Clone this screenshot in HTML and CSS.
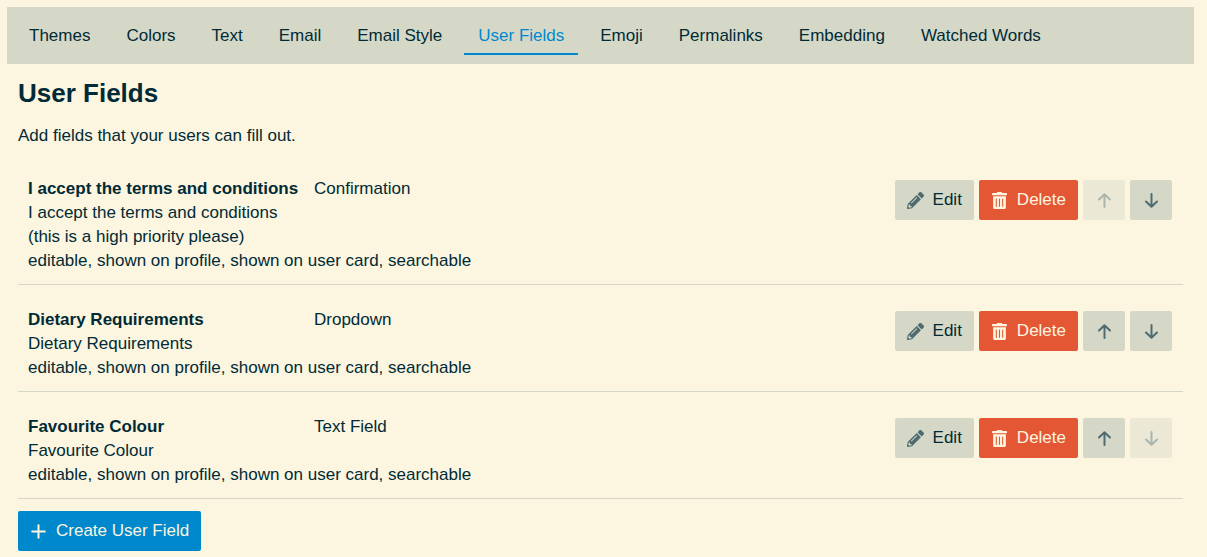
FILE: index.html
```html
<!DOCTYPE html>
<html lang="en">
<head>
<meta charset="utf-8">
<meta name="viewport" content="width=device-width, initial-scale=1">
<title>User Fields</title>
<link rel="stylesheet" href="styles.css">
</head>
<body>
<svg class="sprite" aria-hidden="true">
  <symbol id="pencil" viewBox="0 0 512 512"><path d="M497.900 142.100l-46.100 46.100c-4.700 4.700-12.300 4.700-17 0l-111-111c-4.700-4.700-4.700-12.300 0-17l46.100-46.100c18.700-18.700 49.100-18.700 67.900 0l60.100 60.100c18.800 18.700 18.800 49.100 0 67.900zM284.200 99.800L21.600 362.400.4 483.900c-2.900 16.400 11.400 30.600 27.800 27.800l121.500-21.300 262.600-262.600c4.700-4.700 4.700-12.300 0-17l-111-111c-4.800-4.700-12.400-4.700-17.100 0zM124.100 339.900c-5.500-5.500-5.500-14.300 0-19.800l154-154c5.500-5.500 14.300-5.500 19.800 0s5.500 14.300 0 19.800l-154 154c-5.500 5.500-14.300 5.500-19.800 0zM88 424h48v36.300l-64.500 11.300-31.100-31.100L51.700 376H88v48z"/></symbol>
  <symbol id="trash" viewBox="0 0 448 512"><path d="M32 464a48 48 0 0 0 48 48h288a48 48 0 0 0 48-48V128H32zm272-256a16 16 0 0 1 32 0v224a16 16 0 0 1-32 0zm-96 0a16 16 0 0 1 32 0v224a16 16 0 0 1-32 0zm-96 0a16 16 0 0 1 32 0v224a16 16 0 0 1-32 0zM432 32H312l-9.400-18.700A24 24 0 0 0 281.100 0H166.800a23.720 23.720 0 0 0-21.400 13.300L136 32H16A16 16 0 0 0 0 48v32a16 16 0 0 0 16 16h416a16 16 0 0 0 16-16V48a16 16 0 0 0-16-16z"/></symbol>
  <symbol id="up" viewBox="0 0 17 17"><path class="stroke" d="M8.500 15V2.400M3 7.500l5.500-5.300L14 7.500"/></symbol>
  <symbol id="down" viewBox="0 0 17 17"><path class="stroke" d="M8.500 2v12.600M3 9.500l5.500 5.300L14 9.500"/></symbol>
  <symbol id="plus" viewBox="0 0 17 17"><path class="stroke" d="M8.500 2.200v12.600M2.200 8.500h12.600"/></symbol>
</svg>
<nav class="tabs" aria-label="Customize">
  <a href="#">Themes</a>
  <a href="#">Colors</a>
  <a href="#">Text</a>
  <a href="#">Email</a>
  <a href="#">Email Style</a>
  <a href="#" class="active" aria-current="page">User Fields</a>
  <a href="#">Emoji</a>
  <a href="#">Permalinks</a>
  <a href="#">Embedding</a>
  <a href="#">Watched Words</a>
</nav>
<main class="content">
  <h1>User Fields</h1>
  <p class="intro">Add fields that your users can fill out.</p>
  <section class="field">
    <div class="info">
      <div class="summary"><strong>I accept the terms and conditions</strong><span>Confirmation</span></div>
      <div>I accept the terms and conditions<br>(this is a high priority please)</div>
      <div>editable, shown on profile, shown on user card, searchable</div>
    </div>
    <div class="controls">
      <button type="button" class="btn"><svg class="icon"><use href="#pencil"/></svg>Edit</button>
      <button type="button" class="btn danger"><svg class="icon"><use href="#trash"/></svg>Delete</button>
      <button type="button" class="btn move" aria-label="Move up" disabled><svg class="icon"><use href="#up"/></svg></button>
      <button type="button" class="btn move" aria-label="Move down"><svg class="icon"><use href="#down"/></svg></button>
    </div>
  </section>
  <section class="field">
    <div class="info">
      <div class="summary"><strong>Dietary Requirements</strong><span>Dropdown</span></div>
      <div>Dietary Requirements</div>
      <div>editable, shown on profile, shown on user card, searchable</div>
    </div>
    <div class="controls">
      <button type="button" class="btn"><svg class="icon"><use href="#pencil"/></svg>Edit</button>
      <button type="button" class="btn danger"><svg class="icon"><use href="#trash"/></svg>Delete</button>
      <button type="button" class="btn move" aria-label="Move up"><svg class="icon"><use href="#up"/></svg></button>
      <button type="button" class="btn move" aria-label="Move down"><svg class="icon"><use href="#down"/></svg></button>
    </div>
  </section>
  <section class="field">
    <div class="info">
      <div class="summary"><strong>Favourite Colour</strong><span>Text Field</span></div>
      <div>Favourite Colour</div>
      <div>editable, shown on profile, shown on user card, searchable</div>
    </div>
    <div class="controls">
      <button type="button" class="btn"><svg class="icon"><use href="#pencil"/></svg>Edit</button>
      <button type="button" class="btn danger"><svg class="icon"><use href="#trash"/></svg>Delete</button>
      <button type="button" class="btn move" aria-label="Move up"><svg class="icon"><use href="#up"/></svg></button>
      <button type="button" class="btn move" aria-label="Move down" disabled><svg class="icon"><use href="#down"/></svg></button>
    </div>
  </section>
  <button type="button" class="btn primary"><svg class="icon"><use href="#plus"/></svg>Create User Field</button>
</main>
</body>
</html>
```
FILE: styles.css
```css
* { box-sizing: border-box; }
body {
  margin: 0;
  padding: 7px 13px 0 7px;
  background: #fcf5e0;
  color: #002b36;
  font: 17px/24px "Liberation Sans", Arial, sans-serif;
}
.sprite { display: none; }
.tabs {
  display: flex;
  gap: 8px;
  padding: 9px 8px;
  background: #d6d8c7;
}
.tabs a {
  padding: 8px 14px 5px;
  border-bottom: 2px solid transparent;
  color: inherit;
  text-decoration: none;
  white-space: nowrap;
}
.tabs a.active {
  color: #0088cc;
  border-color: #0088cc;
}
.content { padding: 0 11px; }
h1 {
  margin: 13px 0 15px;
  font-size: 26px;
  line-height: 32px;
}
.intro { margin: 0 0 6px; }
.field {
  display: flex;
  justify-content: space-between;
  padding: 23px 11px 11px 10px;
  border-bottom: 1px solid #d6d8c7;
}
.summary {
  display: grid;
  grid-template-columns: 278px auto;
  column-gap: 8px;
}
.summary strong { white-space: nowrap; }
.controls {
  display: flex;
  align-items: flex-start;
  gap: 5px;
  padding-top: 3px;
}
.btn {
  display: flex;
  align-items: center;
  gap: 9px;
  height: 40px;
  padding: 0 12px;
  border: 0;
  border-radius: 2px;
  background: #d6d8c7;
  color: #002b36;
  font: inherit;
  white-space: nowrap;
}
.move {
  width: 42px;
  justify-content: center;
}
.btn:disabled {
  background: #ebe8d6;
}
.btn:disabled .icon { opacity: 0.4; }
.icon {
  width: 17px;
  height: 17px;
  fill: #4d6b70;
  color: #4d6b70;
}
.stroke {
  fill: none;
  stroke: currentColor;
  stroke-width: 2;
  stroke-linecap: round;
  stroke-linejoin: round;
}
.danger {
  background: #e45735;
  color: #fcf5e0;
}
.primary {
  margin-top: 12px;
  background: #0088cc;
  color: #fcf5e0;
}
.danger .icon, .primary .icon {
  fill: #fcf5e0;
  color: #fcf5e0;
}
```
